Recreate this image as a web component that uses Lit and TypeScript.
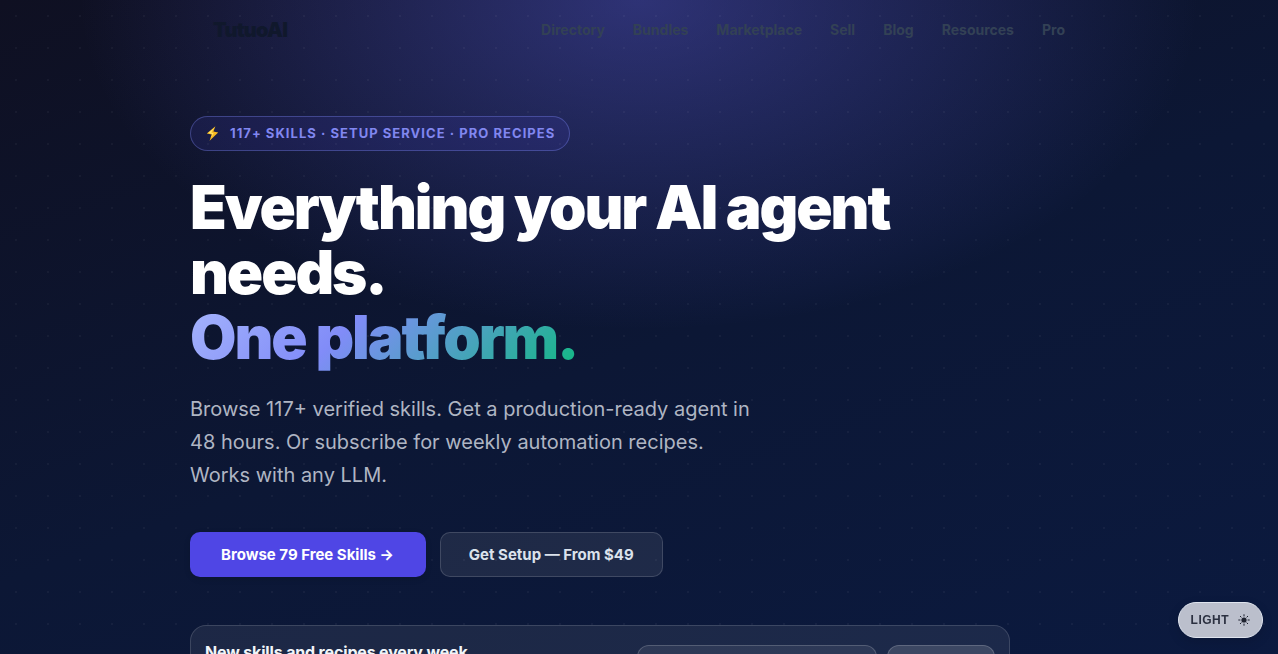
import { LitElement, html, css } from "lit";
import { customElement } from "lit/decorators.js";

const NAV_ITEMS = ["Directory", "Bundles", "Marketplace", "Sell", "Blog", "Resources", "Pro"];

@customElement("site-header")
class SiteHeader extends LitElement {
  static styles = css`
    :host {
      display: block;
    }
    .bar {
      display: flex;
      align-items: center;
      justify-content: space-between;
      box-sizing: border-box;
      max-width: 900px;
      height: 59px;
      margin: 0 auto;
      padding: 0 24px;
    }
    .logo {
      color: #10182c;
      font-size: 20px;
      font-weight: 900;
      letter-spacing: -0.04em;
      text-decoration: none;
    }
    .nav {
      display: flex;
      gap: 28px;
    }
    .link {
      color: #334155;
      font-size: 14px;
      font-weight: 700;
      text-decoration: none;
    }
  `;

  render() {
    return html`
      <header class="bar">
        <a class="logo" href="#">TutuoAI</a>
        <nav class="nav">
          ${NAV_ITEMS.map((item) => html`<a class="link" href="#">${item}</a>`)}
        </nav>
      </header>
    `;
  }
}

@customElement("newsletter-card")
class NewsletterCard extends LitElement {
  static styles = css`
    :host {
      display: block;
    }
    .card {
      display: flex;
      align-items: flex-start;
      justify-content: space-between;
      gap: 16px;
      box-sizing: border-box;
      max-width: 820px;
      padding: 15px 14px;
      border: 1px solid rgba(255, 255, 255, 0.14);
      border-radius: 16px;
      background: rgba(255, 255, 255, 0.07);
    }
    .title {
      margin: 0;
      color: #f1f5f9;
      font-size: 16px;
      line-height: 22px;
      font-weight: 700;
      letter-spacing: -0.01em;
    }
    .form {
      display: flex;
      gap: 10px;
      padding-top: 4px;
    }
    .email,
    .submit {
      box-sizing: border-box;
      height: 42px;
      border: 1px solid rgba(255, 255, 255, 0.18);
      border-radius: 12px;
      color: #ffffff;
      font: 600 14px Inter, sans-serif;
    }
    .email {
      width: 240px;
      padding: 0 14px;
      background: rgba(255, 255, 255, 0.08);
    }
    .submit {
      width: 108px;
      background: rgba(255, 255, 255, 0.14);
    }
  `;

  render() {
    return html`
      <section class="card">
        <h2 class="title" id="title">New skills and recipes every week</h2>
        <form class="form">
          <input class="email" type="email" aria-labelledby="title" />
          <button class="submit" type="button" aria-labelledby="title"></button>
        </form>
      </section>
    `;
  }
}

@customElement("app-root")
class AppRoot extends LitElement {
  static styles = css`
    :host {
      display: block;
      min-height: 100vh;
      font-family: Inter, sans-serif;
      background:
        radial-gradient(circle, rgba(255, 255, 255, 0.04) 1px, transparent 1px) 0 0 / 32px 32px,
        radial-gradient(ellipse 560px 330px at 50% 0, rgba(99, 102, 241, 0.38), rgba(99, 102, 241, 0)) no-repeat,
        linear-gradient(160deg, #0f1022 0%, #0c1735 50%, #0b1a40 100%);
    }
    .hero {
      max-width: 898px;
      margin: 0 auto;
      padding: 57px 0 0;
    }
    .badge {
      display: inline-flex;
      align-items: center;
      gap: 10px;
      box-sizing: border-box;
      height: 35px;
      padding: 0 14px;
      border: 1px solid rgba(129, 140, 248, 0.35);
      border-radius: 18px;
      background: rgba(79, 70, 229, 0.12);
      color: #8187f0;
      font-size: 13px;
      line-height: 15px;
      font-weight: 700;
      letter-spacing: 0.08em;
      text-transform: uppercase;
    }
    .bolt {
      width: 15px;
      height: 15px;
    }
    .heading {
      max-width: 820px;
      margin: 24px 0 0;
      color: #ffffff;
      font-size: 60px;
      line-height: 65px;
      font-weight: 900;
      letter-spacing: -0.035em;
    }
    .accent {
      background: linear-gradient(135deg, #a5b4fc 0%, #818cf8 40%, #10b981 100%);
      -webkit-background-clip: text;
      background-clip: text;
      color: transparent;
    }
    .lead {
      max-width: 560px;
      margin: 23px 0 0;
      color: #afb5c3;
      font-size: 20px;
      line-height: 33px;
    }
    .actions {
      display: flex;
      flex-wrap: wrap;
      gap: 14px;
      margin: 40px 0 48px;
    }
    .button {
      display: flex;
      align-items: center;
      box-sizing: border-box;
      height: 45px;
      border-radius: 10px;
      font-size: 15px;
      font-weight: 700;
      text-decoration: none;
    }
    .primary {
      padding: 0 32px 0 31px;
      background: #4f46e5;
      color: #ffffff;
      box-shadow: 0 2px 6px rgba(0, 0, 0, 0.12);
    }
    .secondary {
      padding: 0 28px;
      border: 1px solid rgba(255, 255, 255, 0.15);
      background: rgba(255, 255, 255, 0.08);
      color: #dbe2ec;
    }
    .theme {
      position: fixed;
      right: 15px;
      bottom: 16px;
      display: flex;
      align-items: center;
      gap: 9px;
      box-sizing: border-box;
      height: 36px;
      padding: 0 12px;
      border: 1px solid #dfe4ee;
      border-radius: 18px;
      background: #bbbfcc;
      color: #2b3040;
      font: 700 12px "Liberation Sans", sans-serif;
      letter-spacing: 0.04em;
      box-shadow: 0 4px 12px rgba(0, 0, 0, 0.12);
    }
    .sun {
      width: 12px;
      height: 12px;
    }
  `;

  render() {
    return html`
      <site-header></site-header>
      <main class="hero">
        <div class="badge">
          <svg class="bolt" viewBox="0 0 15 15" aria-hidden="true">
            <path d="M10.4 0.3 1.8 7.6 6.6 8.6 4.6 14.8 13.2 6.5 8.4 5.6Z" fill="#f5b921" />
            <path d="M9.2 1.8 3.2 7 7.4 7.9 6.2 11.8 8.6 7.3 6.2 6.6Z" fill="#ffe36a" />
          </svg>
          <span>117+ Skills · Setup Service · Pro Recipes</span>
        </div>
        <h1 class="heading">
          Everything your AI agent needs.<br /><span class="accent">One platform.</span>
        </h1>
        <p class="lead">
          Browse 117+ verified skills. Get a production-ready agent in 48 hours. Or subscribe for
          weekly automation recipes. Works with any LLM.
        </p>
        <div class="actions">
          <a class="button primary" href="#">Browse 79 Free Skills →</a>
          <a class="button secondary" href="#">Get Setup — From $49</a>
        </div>
        <newsletter-card></newsletter-card>
      </main>
      <button class="theme" type="button">
        LIGHT
        <svg class="sun" viewBox="0 0 12 12" aria-hidden="true">
          <circle cx="6" cy="6" r="2.6" fill="#1f2330" />
          <path
            d="M6 0.3V2.4M6 9.6V11.7M0.3 6H2.4M9.6 6H11.7M2 2 3.4 3.4M8.6 8.6 10 10M2 10 3.4 8.6M8.6 3.4 10 2"
            stroke="#1f2330"
            stroke-width="1"
          />
        </svg>
      </button>
    `;
  }
}
